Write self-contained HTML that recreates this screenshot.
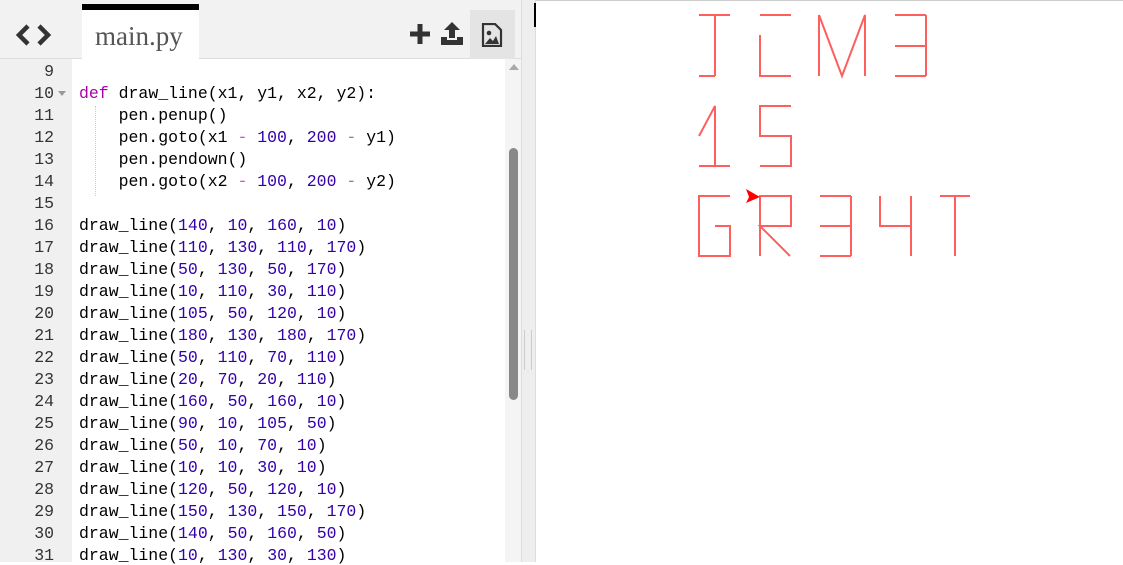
<!DOCTYPE html>
<html><head><style>
*{margin:0;padding:0;box-sizing:border-box}
body{width:1123px;height:562px;overflow:hidden;background:#fff;font-family:"Liberation Sans",sans-serif;position:relative}
#top{position:absolute;left:0;top:0;width:521px;height:59px;background:#f2f2f2;border-bottom:1px solid #ddd}
#tab{position:absolute;left:82px;top:4px;width:117px;height:56px;background:#fff;border-top:6px solid #000}
#tab span{position:absolute;left:13px;top:11px;font-family:"Liberation Serif",serif;font-size:27px;color:#555}
#gut{position:absolute;left:0;top:59px;width:72px;height:503px;background:#f0f0f0}
.ln{position:absolute;left:0;width:54px;text-align:right;font-family:"Liberation Mono",monospace;font-size:16.5px;color:#333}
.cl{position:absolute;left:79px;font-family:"Liberation Mono",monospace;font-size:16.5px;color:#000;white-space:pre}
#code{position:absolute;left:0;top:2px;width:520px;height:560px}
.k{color:#a0a}.n{color:#3300aa}.o{color:#c5c}
#track{position:absolute;left:505px;top:59px;width:16px;height:503px;background:#f4f4f4}
#thumb{position:absolute;left:509px;top:148px;width:9px;height:252px;background:#888;border-radius:5px}
#div{position:absolute;left:521px;top:0;width:15px;height:562px;background:#eee;border-left:1px solid #ddd;border-right:1px solid #ddd}
</style></head><body>
<div id="top">
<svg style="position:absolute;left:8px;top:23px" width="48" height="24"><path d="M20 3 L11 12 L20 21" stroke="#333" stroke-width="4.5" fill="none"/><path d="M39 3 L48 12 L39 21" stroke="#333" stroke-width="4.5" fill="none" transform="translate(-8 0)"/></svg>
<div id="tab"><span>main.py</span></div>
<svg style="position:absolute;left:408px;top:22px" width="24" height="24"><path d="M12 2V22M2 12H22" stroke="#333" stroke-width="5"/></svg>
<svg style="position:absolute;left:438px;top:20px" width="28" height="26"><path d="M14 2 L6 10 H11 V18 H17 V10 H22 Z" fill="#333"/><path d="M3 17 H9 V20 H19 V17 H25 V25 H3Z" fill="#333"/></svg>
<div style="position:absolute;left:470px;top:10px;width:45px;height:49px;background:#e4e4e4"></div>
<svg style="position:absolute;left:481px;top:23px" width="22" height="24"><path d="M2 1 H14 L20 7 V23 H2 Z" fill="none" stroke="#333" stroke-width="2.2"/><circle cx="8" cy="10" r="2.3" fill="#333"/><path d="M4 21 L9 15 L12 18 L15 13 L18 21Z" fill="#333"/></svg>
</div>
<div id="gut"></div>
<div id="track"></div><div id="thumb"></div>
<svg style="position:absolute;left:508px;top:63px" width="12" height="8"><path d="M1 7 L6 1 L11 7Z" fill="#aaa"/></svg>
<div style="position:absolute;left:95px;top:106px;height:90px;border-left:1px dotted #ccc"></div>
<div id="div"></div>
<div style="position:absolute;left:524px;top:330px;width:8px;height:40px;border-left:1px solid #ccc;border-right:1px solid #ccc"></div>
<div style="position:absolute;left:536px;top:0;width:587px;height:1px;background:#ccc"></div>
<div style="position:absolute;left:534px;top:3px;width:2px;height:24px;background:#000"></div>

<div id="code">
<div class="ln" style="top:60px">9</div>
<div class="ln" style="top:82px">10</div><svg style="position:absolute;left:58px;top:89px" width="8" height="6"><path d="M0 0H8L4 5Z" fill="#999"/></svg>
<div class="cl" style="top:82px"><span class="k">def</span> draw_line(x1, y1, x2, y2):</div>
<div class="ln" style="top:104px">11</div><div class="cl" style="top:104px">    pen.penup()</div>
<div class="ln" style="top:126px">12</div><div class="cl" style="top:126px">    pen.goto(x1 <span class="o">-</span> <span class="n">100</span>, <span class="n">200</span> <span class="o">-</span> y1)</div>
<div class="ln" style="top:148px">13</div><div class="cl" style="top:148px">    pen.pendown()</div>
<div class="ln" style="top:170px">14</div><div class="cl" style="top:170px">    pen.goto(x2 <span class="o">-</span> <span class="n">100</span>, <span class="n">200</span> <span class="o">-</span> y2)</div>
<div class="ln" style="top:192px">15</div>
<div class="ln" style="top:214px">16</div><div class="cl" style="top:214px">draw_line(<span class="n">140</span>, <span class="n">10</span>, <span class="n">160</span>, <span class="n">10</span>)</div>
<div class="ln" style="top:236px">17</div><div class="cl" style="top:236px">draw_line(<span class="n">110</span>, <span class="n">130</span>, <span class="n">110</span>, <span class="n">170</span>)</div>
<div class="ln" style="top:258px">18</div><div class="cl" style="top:258px">draw_line(<span class="n">50</span>, <span class="n">130</span>, <span class="n">50</span>, <span class="n">170</span>)</div>
<div class="ln" style="top:280px">19</div><div class="cl" style="top:280px">draw_line(<span class="n">10</span>, <span class="n">110</span>, <span class="n">30</span>, <span class="n">110</span>)</div>
<div class="ln" style="top:302px">20</div><div class="cl" style="top:302px">draw_line(<span class="n">105</span>, <span class="n">50</span>, <span class="n">120</span>, <span class="n">10</span>)</div>
<div class="ln" style="top:324px">21</div><div class="cl" style="top:324px">draw_line(<span class="n">180</span>, <span class="n">130</span>, <span class="n">180</span>, <span class="n">170</span>)</div>
<div class="ln" style="top:346px">22</div><div class="cl" style="top:346px">draw_line(<span class="n">50</span>, <span class="n">110</span>, <span class="n">70</span>, <span class="n">110</span>)</div>
<div class="ln" style="top:368px">23</div><div class="cl" style="top:368px">draw_line(<span class="n">20</span>, <span class="n">70</span>, <span class="n">20</span>, <span class="n">110</span>)</div>
<div class="ln" style="top:390px">24</div><div class="cl" style="top:390px">draw_line(<span class="n">160</span>, <span class="n">50</span>, <span class="n">160</span>, <span class="n">10</span>)</div>
<div class="ln" style="top:412px">25</div><div class="cl" style="top:412px">draw_line(<span class="n">90</span>, <span class="n">10</span>, <span class="n">105</span>, <span class="n">50</span>)</div>
<div class="ln" style="top:434px">26</div><div class="cl" style="top:434px">draw_line(<span class="n">50</span>, <span class="n">10</span>, <span class="n">70</span>, <span class="n">10</span>)</div>
<div class="ln" style="top:456px">27</div><div class="cl" style="top:456px">draw_line(<span class="n">10</span>, <span class="n">10</span>, <span class="n">30</span>, <span class="n">10</span>)</div>
<div class="ln" style="top:478px">28</div><div class="cl" style="top:478px">draw_line(<span class="n">120</span>, <span class="n">50</span>, <span class="n">120</span>, <span class="n">10</span>)</div>
<div class="ln" style="top:500px">29</div><div class="cl" style="top:500px">draw_line(<span class="n">150</span>, <span class="n">130</span>, <span class="n">150</span>, <span class="n">170</span>)</div>
<div class="ln" style="top:522px">30</div><div class="cl" style="top:522px">draw_line(<span class="n">140</span>, <span class="n">50</span>, <span class="n">160</span>, <span class="n">50</span>)</div>
<div class="ln" style="top:544px">31</div><div class="cl" style="top:544px">draw_line(<span class="n">10</span>, <span class="n">130</span>, <span class="n">30</span>, <span class="n">130</span>)</div>
</div>

<svg style="position:absolute;left:0;top:0" width="1123" height="562">
<g stroke="#ff4d4d" stroke-width="2" fill="none" opacity="0.9">
<path d="M699 15H730M715 15V76M699 76H715"/>
<path d="M760 15H791M760 35V76H791"/>
<path d="M819 76V15L842 76L865 15V76"/>
<path d="M895 15H926M895 46H926M895 76H926M926 15V76"/>
<path d="M699 136L715 106V166M699 166H730"/>
<path d="M791 106H760V136H791V166H760"/>
<path d="M730 196H699V256H730V226H715"/>
<path d="M760 256V196H791V226H760L790 256"/>
<path d="M820 196H851M820 226H851M820 256H851M851 196V256"/>
<path d="M880 196V226H911M911 196V256"/>
<path d="M940 196H970M955 196V256"/>
</g>
<path d="M746 189L760 197L746 203L749 197Z" fill="#f00"/>
</svg>
</body></html>
